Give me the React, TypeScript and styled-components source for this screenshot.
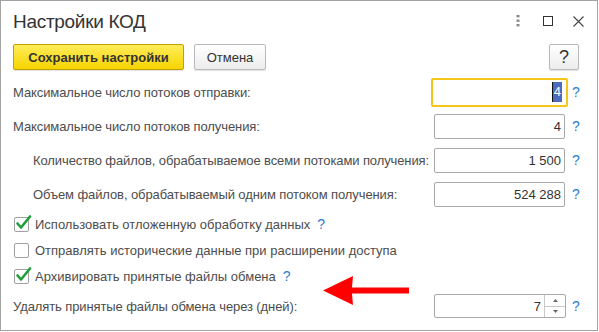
import React from "react";
import styled, { createGlobalStyle } from "styled-components";

const Global = createGlobalStyle`
  html, body { margin: 0; padding: 0; background: #fff; }
  body { font-family: "Liberation Sans", Arial, sans-serif; color: #4d4d4d; }
`;

const Window = styled.div`
  position: relative;
  box-sizing: border-box;
  width: 598px;
  height: 331px;
  border: 1px solid #a3a3a3;
  background: #fff;
  display: flex;
  flex-direction: column;
`;

const TitleBar = styled.div`
  display: flex;
  align-items: flex-start;
  height: 43px;
  padding: 0 4px 0 12px;
`;

const Title = styled.div`
  flex: 1;
  padding-top: 9px;
  font-size: 19px;
  letter-spacing: -0.3px;
  line-height: 23px;
  color: #333;
`;

const Controls = styled.div`
  display: flex;
  height: 40px;
  align-items: center;
`;

const ControlCell = styled.div`
  width: 30px;
  height: 30px;
  display: flex;
  align-items: center;
  justify-content: center;
`;

const Toolbar = styled.div`
  display: flex;
  align-items: center;
  gap: 10px;
  height: 26px;
  padding: 0 18px 0 12px;
`;

const Button = styled.button<{ $primary?: boolean; $width: number }>`
  box-sizing: border-box;
  width: ${(p) => p.$width}px;
  height: 26px;
  margin: 0;
  padding: 0;
  border-radius: 2px;
  font-family: "Liberation Sans", Arial, sans-serif;
  font-size: 13px;
  font-weight: ${(p) => (p.$primary ? 700 : 400)};
  color: #333;
  border: 1px solid ${(p) => (p.$primary ? "#bfa200" : "#b9b9b9")};
  background: ${(p) =>
    p.$primary
      ? "linear-gradient(#ffec5a, #f6d400)"
      : "linear-gradient(#ffffff, #ececec)"};
  box-shadow: 0 1px 1px rgba(0, 0, 0, 0.12);
`;

const HelpButton = styled(Button)`
  margin-left: auto;
  font-size: 18px;
  line-height: 24px;
`;

const Form = styled.div`
  display: flex;
  flex-direction: column;
  padding: 5px 18px 0 12px;
`;

const Row = styled.div`
  display: flex;
  align-items: center;
  height: 34px;
`;

const Label = styled.div<{ $indent?: boolean }>`
  flex: 1;
  padding-left: ${(p) => (p.$indent ? 20 : 0)}px;
  font-size: 13px;
  letter-spacing: -0.1px;
  color: #4d4d4d;
  white-space: nowrap;
`;

const Field = styled.div<{ $focused?: boolean }>`
  box-sizing: border-box;
  width: ${(p) => (p.$focused ? 137 : 131)}px;
  height: ${(p) => (p.$focused ? 29 : 25)}px;
  margin: ${(p) => (p.$focused ? "0 -3px 0 -3px" : "0")};
  border: ${(p) => (p.$focused ? "2px solid #f5c518" : "1px solid #a9a9a9")};
  border-radius: 2px;
  background: #fff;
  display: flex;
  align-items: center;
  justify-content: flex-end;
  padding-right: ${(p) => (p.$focused ? 4 : 3)}px;
  font-size: 13px;
  color: #333;
`;

const Selected = styled.span`
  background: #4b6bc0;
  color: #fff;
  line-height: 20px;
  padding: 0 1px;
  border-left: 1px solid #111;
`;

const SpinField = styled.div`
  box-sizing: border-box;
  width: 132px;
  height: 24px;
  margin-right: -1px;
  border: 1px solid #a9a9a9;
  border-radius: 2px;
  background: #fff;
  display: flex;
  font-size: 13px;
  color: #333;
`;

const SpinValue = styled.div`
  flex: 1;
  display: flex;
  align-items: center;
  justify-content: flex-end;
  padding-right: 3px;
`;

const SpinButtons = styled.div`
  width: 20px;
  border-left: 1px solid #c8c8c8;
  display: flex;
  flex-direction: column;
`;

const SpinHalf = styled.div<{ $top?: boolean }>`
  flex: 1;
  display: flex;
  align-items: center;
  justify-content: center;
  border-bottom: ${(p) => (p.$top ? "1px solid #c8c8c8" : "none")};
`;

const Help = styled.span`
  width: 14px;
  padding-left: 7px;
  box-sizing: border-box;
  font-size: 14px;
  color: #2b7dce;
`;

const InlineHelp = styled.span`
  margin-left: 7px;
  font-size: 14px;
  color: #2b7dce;
`;

const CheckRow = styled.div`
  display: flex;
  align-items: center;
  height: 26px;
  padding-left: 1px;
`;

const Box = styled.div`
  position: relative;
  box-sizing: border-box;
  width: 15px;
  height: 15px;
  border: 1px solid #a0a0a0;
  border-radius: 2px;
  background: #fff;
`;

const CheckMark = styled.svg`
  position: absolute;
  left: 0px;
  top: -4px;
`;

const CheckText = styled.span`
  margin-left: 6px;
  font-size: 13px;
  color: #4d4d4d;
  white-space: nowrap;
`;

const Arrow = styled.svg`
  position: absolute;
  left: 321px;
  top: 274px;
`;

function Checkbox({ checked, children }: { checked?: boolean; children: React.ReactNode }) {
  return (
    <CheckRow>
      <Box>
        {checked && (
          <CheckMark width="17" height="17" viewBox="0 0 17 17">
            <path d="M2.5 9.5 L6 13.5 L15 2.5" fill="none" stroke="#1f9e3a" strokeWidth="2.6" strokeLinecap="round" strokeLinejoin="round" />
          </CheckMark>
        )}
      </Box>
      <CheckText>{children}</CheckText>
    </CheckRow>
  );
}

export default function App() {
  return (
    <>
      <Global />
      <Window>
        <TitleBar>
          <Title>Настройки КОД</Title>
          <Controls>
            <ControlCell>
              <svg width="4" height="12" viewBox="0 0 4 12">
                <rect x="0.5" y="0" width="3" height="2.4" fill="#8a8a8a" />
                <rect x="0.5" y="4.5" width="3" height="2.4" fill="#8a8a8a" />
                <rect x="0.5" y="9" width="3" height="2.4" fill="#8a8a8a" />
              </svg>
            </ControlCell>
            <ControlCell>
              <svg width="10" height="10" viewBox="0 0 10 10">
                <rect x="0.5" y="0.5" width="9" height="9" fill="none" stroke="#333" strokeWidth="1" />
              </svg>
            </ControlCell>
            <ControlCell>
              <svg width="11" height="11" viewBox="0 0 11 11">
                <path d="M0.5 0.5 L10.5 10.5 M10.5 0.5 L0.5 10.5" stroke="#444" strokeWidth="1.1" />
              </svg>
            </ControlCell>
          </Controls>
        </TitleBar>
        <Toolbar>
          <Button $primary $width={171}>Сохранить настройки</Button>
          <Button $width={72}>Отмена</Button>
          <HelpButton $width={30}>?</HelpButton>
        </Toolbar>
        <Form>
          <Row>
            <Label>Максимальное число потоков отправки:</Label>
            <Field $focused>
              <Selected>4</Selected>
            </Field>
            <Help>?</Help>
          </Row>
          <Row>
            <Label>Максимальное число потоков получения:</Label>
            <Field>4</Field>
            <Help>?</Help>
          </Row>
          <Row>
            <Label $indent>Количество файлов, обрабатываемое всеми потоками получения:</Label>
            <Field>1 500</Field>
            <Help>?</Help>
          </Row>
          <Row>
            <Label $indent>Объем файлов, обрабатываемый одним потоком получения:</Label>
            <Field>524 288</Field>
            <Help>?</Help>
          </Row>
          <Checkbox checked>
            Использовать отложенную обработку данных<InlineHelp>?</InlineHelp>
          </Checkbox>
          <Checkbox>Отправлять исторические данные при расширении доступа</Checkbox>
          <Checkbox checked>
            Архивировать принятые файлы обмена<InlineHelp>?</InlineHelp>
          </Checkbox>
          <Row>
            <Label>Удалять принятые файлы обмена через (дней):</Label>
            <SpinField>
              <SpinValue>7</SpinValue>
              <SpinButtons>
                <SpinHalf $top>
                  <svg width="5" height="3" viewBox="0 0 5 3">
                    <path d="M0 3 L2.5 0 L5 3 Z" fill="#666" />
                  </svg>
                </SpinHalf>
                <SpinHalf>
                  <svg width="5" height="3" viewBox="0 0 5 3">
                    <path d="M0 0 L2.5 3 L5 0 Z" fill="#666" />
                  </svg>
                </SpinHalf>
              </SpinButtons>
            </SpinField>
            <Help>?</Help>
          </Row>
        </Form>
        <Arrow width="88" height="32" viewBox="0 0 88 32">
          <path d="M1 15.5 L31 1 L30 12.5 L87 12.5 L87 18.5 L30 18.5 L31 30 Z" fill="#f00" />
        </Arrow>
      </Window>
    </>
  );
}
